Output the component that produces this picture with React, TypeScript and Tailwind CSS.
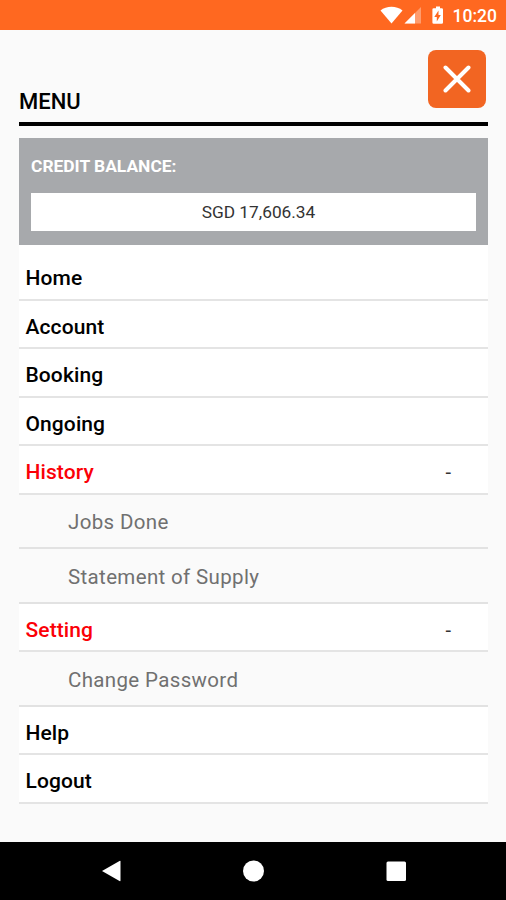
interface MenuEntry {
  label: string;
  size: string;
  children?: { label: string; size: string }[];
}

const MENU: MenuEntry[] = [
  { label: "Home", size: "h-14 pt-3" },
  { label: "Account", size: "h-12 pt-1.5" },
  { label: "Booking", size: "h-[49px] pt-1" },
  { label: "Ongoing", size: "h-12 pt-1.5" },
  {
    label: "History",
    size: "h-[49px] pt-1",
    children: [
      { label: "Jobs Done", size: "h-[54px] pt-[3px]" },
      { label: "Statement of Supply", size: "h-[55px] pt-1" },
    ],
  },
  {
    label: "Setting",
    size: "h-12 pt-1.5",
    children: [{ label: "Change Password", size: "h-[55px] pt-1" }],
  },
  { label: "Help", size: "h-12 pt-1.5" },
  { label: "Logout", size: "h-[49px] pt-[5px]" },
];

export default function App() {
  return (
    <div className="flex h-[900px] w-[506px] flex-col overflow-hidden bg-[#fafafa] font-['Roboto',sans-serif] text-black">
      <StatusBar />
      <main className="flex-1 pt-5 pr-[18px] pl-[19px]">
        <header className="flex h-[76px] items-start justify-between border-b-4 border-black pr-0.5">
          <h1 className="pt-[38px] text-[22px] leading-7 font-medium">MENU</h1>
          <CloseButton />
        </header>
        <CreditBalance amount="SGD 17,606.34" />
        <nav>
          {MENU.map((entry) => (
            <MenuItem key={entry.label} entry={entry} />
          ))}
        </nav>
      </main>
      <NavigationBar />
    </div>
  );
}

function StatusBar() {
  return (
    <div className="flex h-[30px] items-center justify-end bg-[#ff6820] pr-[9px] text-white">
      <svg width="66" height="30" viewBox="0 0 66 30" fill="currentColor">
        <path d="M1.5 10.5C7.5 5.5 17.5 5.5 23.5 10.5L12.5 23.5Z" />
        <path d="M42 7V23.5H25.5Z" opacity=".35" />
        <path d="M36 13V23.5H25.5Z" />
        <path
          fillRule="evenodd"
          d="M57 6.5h4v1.8h1.700q1.3 0 1.3 1.3v12.8q0 1.3-1.3 1.3h-8q-1.3 0-1.3-1.3V9.6q0-1.3 1.3-1.3H57ZM59.500 10.5l-4.200 6.600h2.500v4.400l4-6.600h-2.300Z"
        />
      </svg>
      <span className="ml-2 pt-[3px] text-[17.5px] leading-none font-medium">10:20</span>
    </div>
  );
}

function CloseButton() {
  return (
    <button
      aria-label="Close menu"
      className="flex size-[58px] items-center justify-center rounded-lg bg-[#f26522]"
    >
      <svg width="28" height="28" viewBox="0 0 28 28" stroke="white" strokeWidth="4" strokeLinecap="round">
        <path d="M2.5 2.5 25.5 25.5M25.5 2.5 2.5 25.5" />
      </svg>
    </button>
  );
}

function CreditBalance({ amount }: { amount: string }) {
  return (
    <section className="mt-3 h-[107px] bg-[#a7a9ac] px-3 pt-[18px]">
      <h2 className="text-[17.4px] leading-5 font-bold text-white">CREDIT BALANCE:</h2>
      <p className="mt-[17px] h-[38px] bg-white pl-[10px] text-center text-[17.3px] leading-[39px] text-[#333]">
        {amount}
      </p>
    </section>
  );
}

function MenuItem({ entry }: { entry: MenuEntry }) {
  const open = !!entry.children;

  return (
    <>
      <div
        className={`flex items-center justify-between border-b-2 border-[#e4e4e4] bg-white pr-[37px] pl-[6.5px] ${entry.size}`}
      >
        <span className={`text-[21px] leading-6 font-medium tracking-[0.1px] ${open ? "text-[#fb0007]" : ""}`}>
          {entry.label}
        </span>
        {open && <span className="text-xl leading-6 text-[#333]">-</span>}
      </div>
      {entry.children?.map((child) => (
        <div
          key={child.label}
          className={`flex items-center border-b-2 border-[#e2e2e2] pl-[49px] text-[20.5px] tracking-[0.35px] text-[#707070] ${child.size}`}
        >
          {child.label}
        </div>
      ))}
    </>
  );
}

function NavigationBar() {
  return (
    <div className="flex h-[58px] items-center justify-center bg-black">
      <svg width="306" height="24" viewBox="0 0 306 24" fill="white">
        <path d="M2 12 19.5 2Q20.5 1.5 20.5 2.5V21.5Q20.5 22.5 19.5 22Z" />
        <circle cx="153.5" cy="12" r="10.5" />
        <rect x="286.5" y="2.5" width="19.5" height="19.5" rx="1.5" />
      </svg>
    </div>
  );
}
